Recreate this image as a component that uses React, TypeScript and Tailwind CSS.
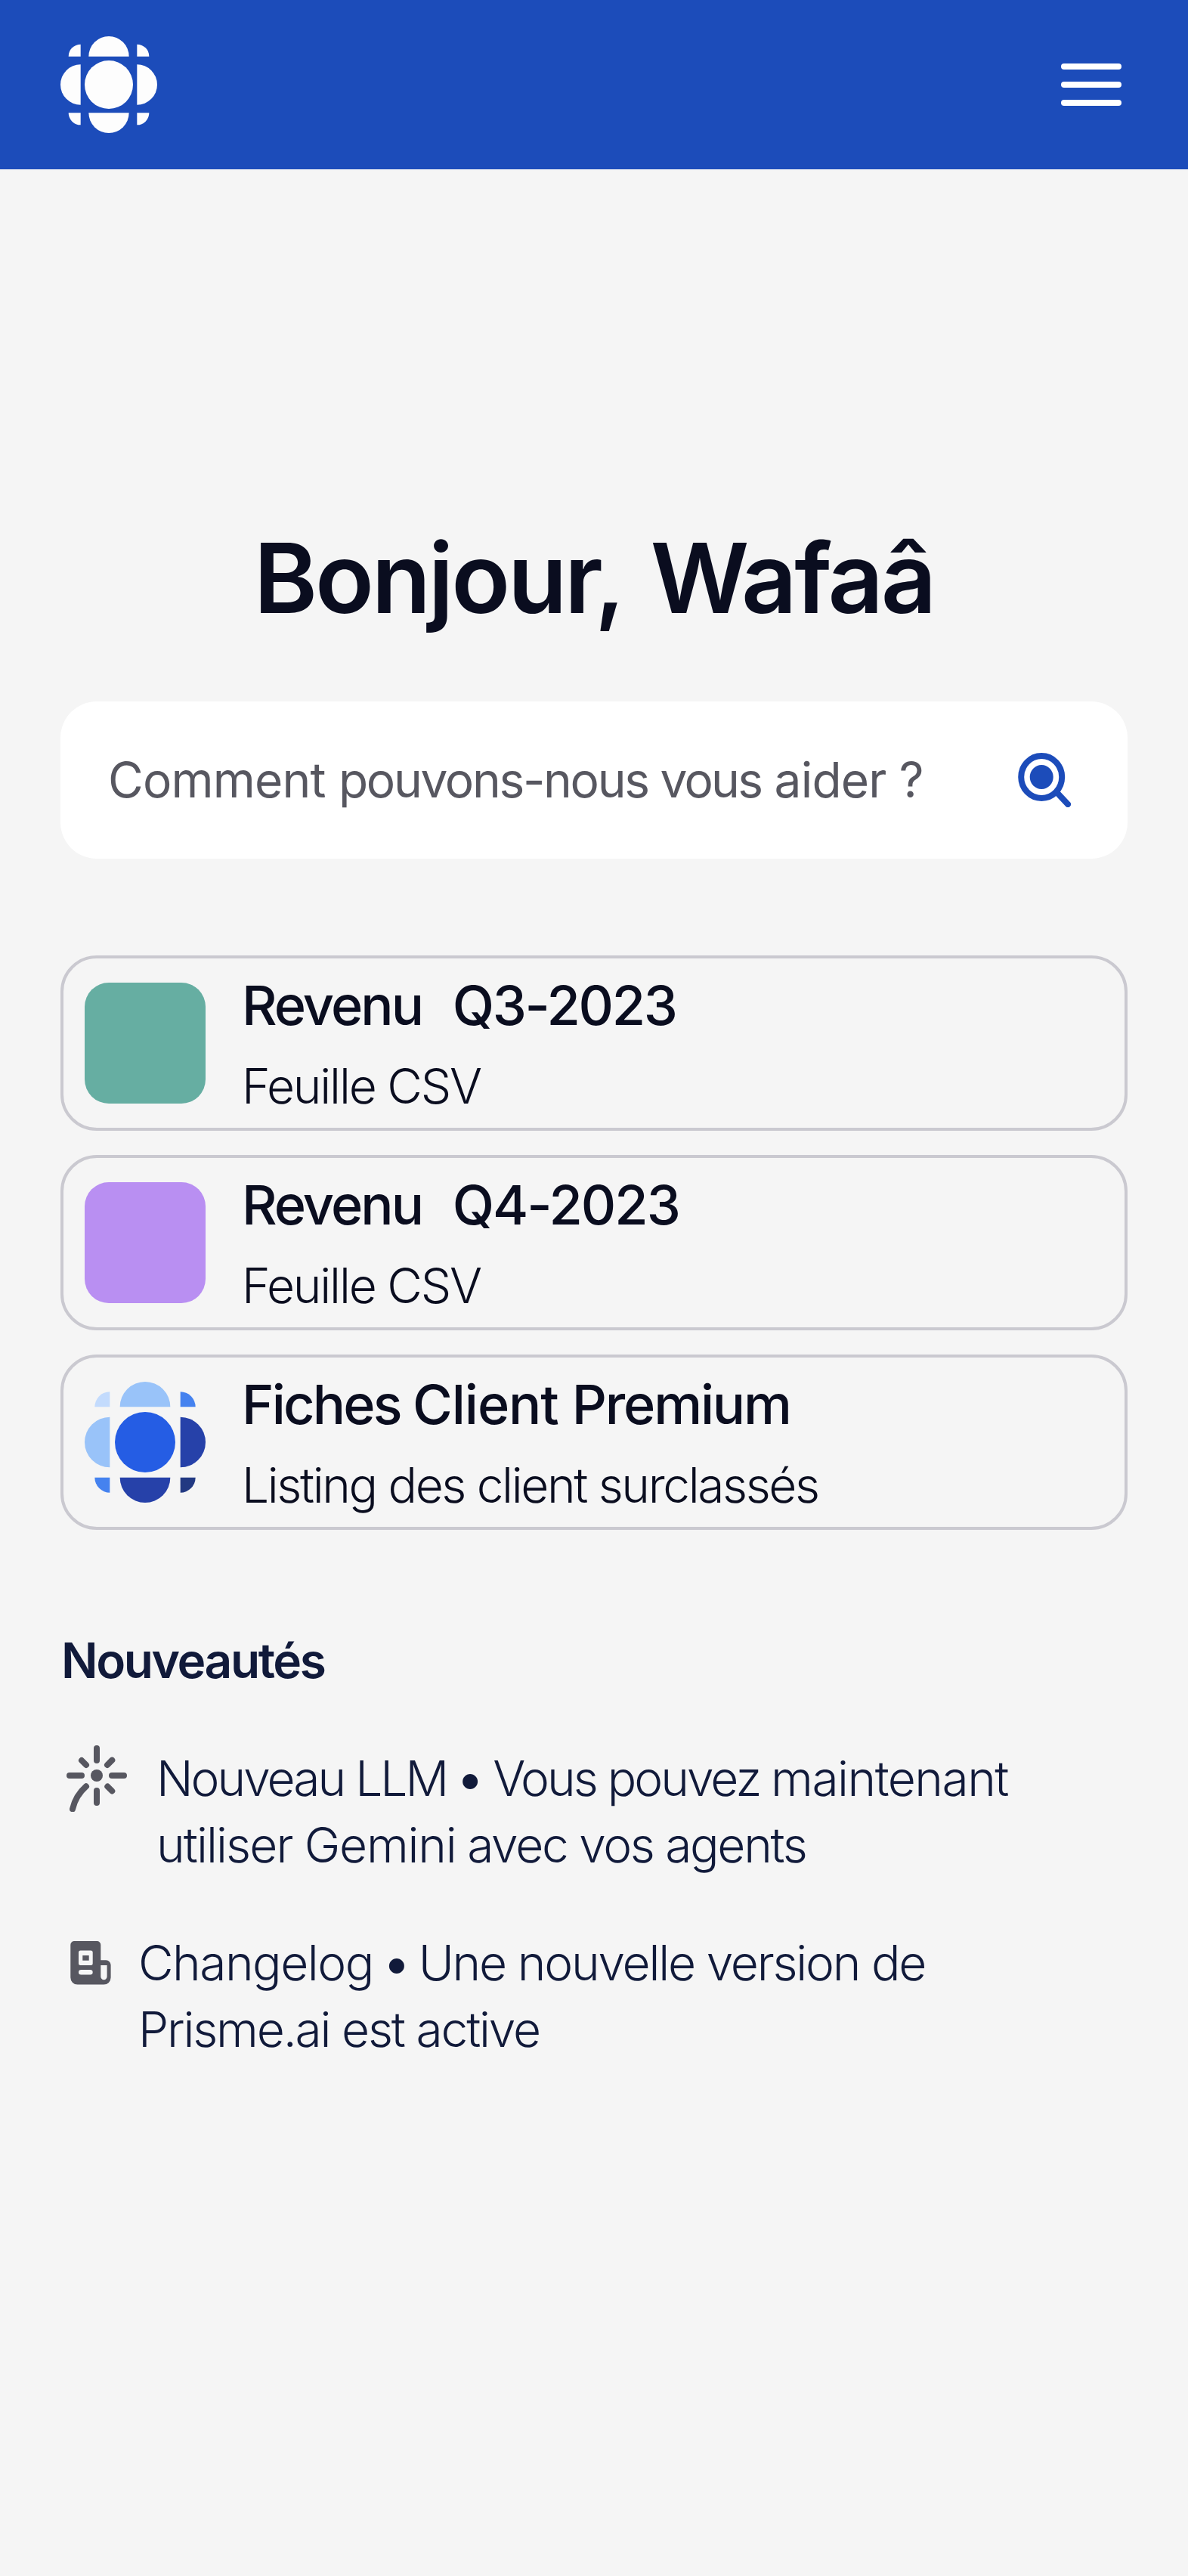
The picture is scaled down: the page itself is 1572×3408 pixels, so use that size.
type LogoColors = {
  center: string
  top: string
  left: string
  right: string
  bottom: string
  topLeft: string
  topRight: string
  bottomLeft: string
  bottomRight: string
}

const WHITE_LOGO: LogoColors = {
  center: '#fdfdfd',
  top: '#fdfdfd',
  left: '#fdfdfd',
  right: '#fdfdfd',
  bottom: '#fdfdfd',
  topLeft: '#fdfdfd',
  topRight: '#fdfdfd',
  bottomLeft: '#fdfdfd',
  bottomRight: '#fdfdfd',
}

const BLUE_LOGO: LogoColors = {
  center: '#255de4',
  top: '#99c3f9',
  left: '#99c3f9',
  right: '#2641a9',
  bottom: '#2641a9',
  topLeft: '#c3dbfd',
  topRight: '#4582ef',
  bottomLeft: '#4582ef',
  bottomRight: '#223982',
}

function Logo({ colors, className }: { colors: LogoColors; className: string }) {
  return (
    <svg viewBox="0 0 24 24" className={className}>
      <circle cx="12" cy="12" r="6" fill={colors.center} />
      <path d="M7 5a5 5 0 0 1 10 0z" fill={colors.top} />
      <path d="M7 19a5 5 0 0 0 10 0z" fill={colors.bottom} />
      <path d="M5 7a5 5 0 0 0 0 10z" fill={colors.left} />
      <path d="M19 7a5 5 0 0 1 0 10z" fill={colors.right} />
      <path d="M2 5a3 3 0 0 1 3-3v3z" fill={colors.topLeft} />
      <path d="M19 2a3 3 0 0 1 3 3h-3z" fill={colors.topRight} />
      <path d="M2 19h3v3a3 3 0 0 1-3-3z" fill={colors.bottomLeft} />
      <path d="M19 19h3a3 3 0 0 1-3 3z" fill={colors.bottomRight} />
    </svg>
  )
}

function MenuIcon() {
  return (
    <button aria-label="Menu" className="flex w-20 flex-col gap-4">
      <span className="h-2 rounded-full bg-white" />
      <span className="h-2 rounded-full bg-white" />
      <span className="h-2 rounded-full bg-white" />
    </button>
  )
}

function SearchIcon() {
  return (
    <svg viewBox="0 0 70 72" className="h-[72px] w-[70px] shrink-0" fill="none">
      <ellipse cx="31.2" cy="32" rx="27" ry="28" stroke="#1c4cba" strokeWidth="8" />
      <ellipse cx="31.2" cy="32" rx="15.5" ry="16" fill="#1c4cba" />
      <path d="M51.5 52.5L66 68" stroke="#1c4cba" strokeWidth="8" strokeLinecap="round" />
    </svg>
  )
}

function SparkIcon() {
  return (
    <svg viewBox="0 0 80 88" className="h-22 w-20 shrink-0" fill="none">
      <circle cx="40" cy="40" r="8" fill="#575760" />
      <path
        d="M40 4v16M40 60v16M4 40h16M60 40h16M20 20l6 6M60.3 19.7L54 26M54.3 54.5l6 6M26 54.3Q12 66.7 8 84.3"
        stroke="#575760"
        strokeWidth="8"
        strokeLinecap="round"
      />
    </svg>
  )
}

function NewsIcon() {
  return (
    <svg viewBox="0 0 54 58" className="h-[58px] w-[54px] shrink-0">
      <path
        fill="#575760"
        fillRule="evenodd"
        d="M5.3 0H35.3a5 5 0 0 1 5 5V25.3H47.3a6.3 6.3 0 0 1 6.3 6.3V48.3a9.3 9.3 0 0 1-9.3 9.3H9.6A9.3 9.3 0 0 1 .3 48.3V5A5 5 0 0 1 5.3 0zM13.5 12.5a2.5 2.5 0 0 0-2.5 2.5V29.5a2.5 2.5 0 0 0 2.5 2.5H27.2a2.5 2.5 0 0 0 2.5-2.5V15a2.5 2.5 0 0 0-2.5-2.5zM14.3 38a3.3 3.3 0 0 0 0 6.6H26.4a3.3 3.3 0 0 0 0-6.6zM40.3 32V47a4.15 4.15 0 0 0 8.3 0V32z"
      />
      <rect x="16.3" y="19" width="8.4" height="6.7" fill="#575760" />
    </svg>
  )
}

const CARDS = [
  {
    title: (
      <>
        <span className="tracking-[-2.9px]">{'Revenu  '}</span>
        <span className="tracking-[-2.3px]">Q3-2023</span>
      </>
    ),
    subtitle: <span className="tracking-[-2.18px]">Feuille CSV</span>,
    thumb: <div className="size-40 shrink-0 rounded-[32px] bg-[#66aea2]" />,
    titleWordSpacing: '[word-spacing:4px]',
  },
  {
    title: (
      <>
        <span className="tracking-[-2.9px]">{'Revenu  '}</span>
        <span className="tracking-[-2px]">Q4-2023</span>
      </>
    ),
    subtitle: <span className="tracking-[-2.18px]">Feuille CSV</span>,
    thumb: <div className="size-40 shrink-0 rounded-[32px] bg-[#b98ff2]" />,
    titleWordSpacing: '[word-spacing:4px]',
  },
  {
    title: (
      <>
        <span className="tracking-[-2.8px]">Fiches </span>
        <span className="tracking-[-1.1px]">Client </span>
        <span className="tracking-[-2.2px]">Premium</span>
      </>
    ),
    subtitle: <span className="tracking-[-2.36px]">Listing des client surclassés</span>,
    thumb: <Logo colors={BLUE_LOGO} className="size-40 shrink-0" />,
    titleWordSpacing: '',
  },
]

export default function App() {
  return (
    <div className="min-h-[3408px] w-full bg-[#f5f5f5] font-['Inter',sans-serif] text-[#0a0d1f]">
      <header className="flex h-56 items-center justify-between bg-[#1c4cba] pr-[88px] pl-20">
        <Logo colors={WHITE_LOGO} className="size-32" />
        <MenuIcon />
      </header>

      <main className="px-20 pt-[461px]">
        <h1 className="text-center text-[128px] leading-[160px] font-semibold tracking-[-3.2px] [word-spacing:10px]">
          Bonjour, Wafaâ
        </h1>

        <div className="mt-[83px] flex h-52 items-center justify-between rounded-[48px] bg-white pr-[75px] pl-[63px]">
          <span className="text-[64px] leading-[88px] whitespace-pre text-[#575760]">
            <span className="tracking-[-0.8px]">Comment </span>
            <span className="tracking-[-2.3px]">pouvons-nous </span>
            <span className="tracking-[-2.7px] [word-spacing:2px]">vous </span>
            <span className="tracking-[-0.8px]">aider ?</span>
          </span>
          <SearchIcon />
        </div>

        <div className="mt-32 flex flex-col gap-8">
          {CARDS.map((card, index) => (
            <div
              key={index}
              className="flex h-58 items-start gap-12 rounded-[48px] border-4 border-[#cac9d0] pl-7"
            >
              <div className="pt-8">{card.thumb}</div>
              <div className="pt-2 whitespace-pre">
                <div className={`text-[72px] leading-[108px] font-medium ${card.titleWordSpacing}`}>
                  {card.title}
                </div>
                <div className="mt-[9px] text-[64px] leading-[88px] font-light">{card.subtitle}</div>
              </div>
            </div>
          ))}
        </div>

        <section className="mt-[129px] text-[64px] leading-[88px] text-[#111a3a]">
          <h2 className="pl-px font-semibold tracking-[-2.4px]">Nouveautés</h2>

          <div className="mt-17 flex items-start gap-[39px] pl-2">
            <SparkIcon />
            <p className="font-light whitespace-pre">
              <span className="block">
                <span className="tracking-[-3px]">Nouveau LLM </span>
                <span className="font-semibold tracking-[-1px]">•</span>
                <span className="tracking-[-3px]"> Vous pouvez </span>
                <span className="tracking-[-1.5px]">maintenant</span>
              </span>
              <span className="block">
                <span className="tracking-[-1.9px]">utiliser </span>
                <span className="tracking-[-1.2px] [word-spacing:-2px]">Gemini </span>
                <span className="tracking-[-2.3px]">avec vos agents</span>
              </span>
            </p>
          </div>

          <div className="mt-17 flex items-start gap-9 pl-[13px]">
            <div className="pt-[15px]">
              <NewsIcon />
            </div>
            <p className="font-light whitespace-pre">
              <span className="block">
                <span className="tracking-[-1.5px]">Changelog</span>
                <span className="tracking-[-3px]"> </span>
                <span className="font-semibold tracking-[-3px]">•</span>
                <span className="tracking-[-2.2px]"> Une nouvelle version de</span>
              </span>
              <span className="block tracking-[-2.18px]">Prisme.ai est active</span>
            </p>
          </div>
        </section>
      </main>
    </div>
  )
}
